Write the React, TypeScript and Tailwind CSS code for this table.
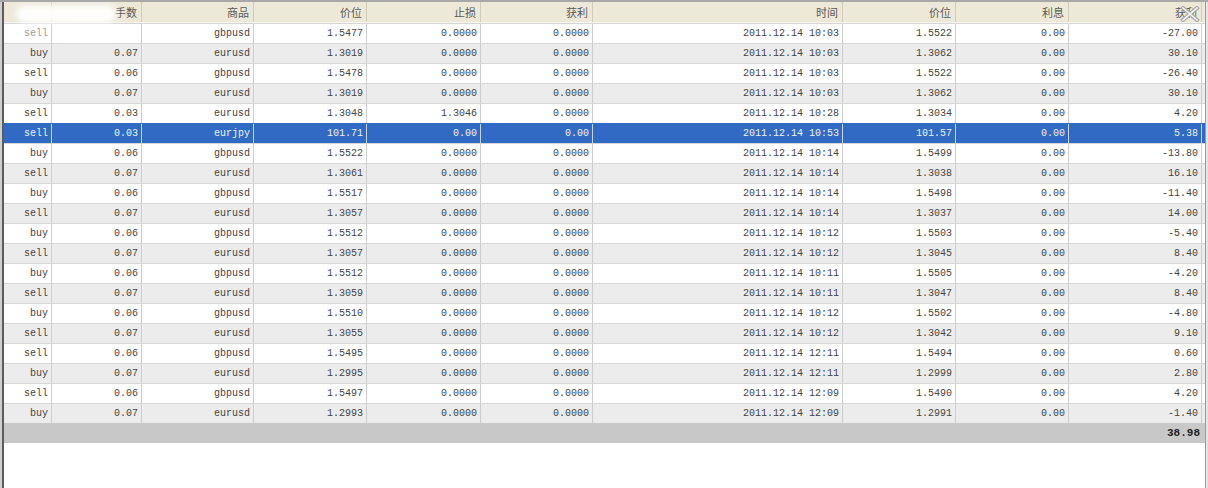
import React from "react";

const widths = [48, 90, 112, 113, 114, 112, 250, 113, 113, 133];
const headers = ["", "手数", "商品", "价位", "止损", "获利", "时间", "价位", "利息", "获利"];

const rows: string[][] = [
  ["sell", "", "gbpusd", "1.5477", "0.0000", "0.0000", "2011.12.14 10:03", "1.5522", "0.00", "-27.00"],
  ["buy", "0.07", "eurusd", "1.3019", "0.0000", "0.0000", "2011.12.14 10:03", "1.3062", "0.00", "30.10"],
  ["sell", "0.06", "gbpusd", "1.5478", "0.0000", "0.0000", "2011.12.14 10:03", "1.5522", "0.00", "-26.40"],
  ["buy", "0.07", "eurusd", "1.3019", "0.0000", "0.0000", "2011.12.14 10:03", "1.3062", "0.00", "30.10"],
  ["sell", "0.03", "eurusd", "1.3048", "1.3046", "0.0000", "2011.12.14 10:28", "1.3034", "0.00", "4.20"],
  ["sell", "0.03", "eurjpy", "101.71", "0.00", "0.00", "2011.12.14 10:53", "101.57", "0.00", "5.38"],
  ["buy", "0.06", "gbpusd", "1.5522", "0.0000", "0.0000", "2011.12.14 10:14", "1.5499", "0.00", "-13.80"],
  ["sell", "0.07", "eurusd", "1.3061", "0.0000", "0.0000", "2011.12.14 10:14", "1.3038", "0.00", "16.10"],
  ["buy", "0.06", "gbpusd", "1.5517", "0.0000", "0.0000", "2011.12.14 10:14", "1.5498", "0.00", "-11.40"],
  ["sell", "0.07", "eurusd", "1.3057", "0.0000", "0.0000", "2011.12.14 10:14", "1.3037", "0.00", "14.00"],
  ["buy", "0.06", "gbpusd", "1.5512", "0.0000", "0.0000", "2011.12.14 10:12", "1.5503", "0.00", "-5.40"],
  ["sell", "0.07", "eurusd", "1.3057", "0.0000", "0.0000", "2011.12.14 10:12", "1.3045", "0.00", "8.40"],
  ["buy", "0.06", "gbpusd", "1.5512", "0.0000", "0.0000", "2011.12.14 10:11", "1.5505", "0.00", "-4.20"],
  ["sell", "0.07", "eurusd", "1.3059", "0.0000", "0.0000", "2011.12.14 10:11", "1.3047", "0.00", "8.40"],
  ["buy", "0.06", "gbpusd", "1.5510", "0.0000", "0.0000", "2011.12.14 10:12", "1.5502", "0.00", "-4.80"],
  ["sell", "0.07", "eurusd", "1.3055", "0.0000", "0.0000", "2011.12.14 10:12", "1.3042", "0.00", "9.10"],
  ["sell", "0.06", "gbpusd", "1.5495", "0.0000", "0.0000", "2011.12.14 12:11", "1.5494", "0.00", "0.60"],
  ["buy", "0.07", "eurusd", "1.2995", "0.0000", "0.0000", "2011.12.14 12:11", "1.2999", "0.00", "2.80"],
  ["sell", "0.06", "gbpusd", "1.5497", "0.0000", "0.0000", "2011.12.14 12:09", "1.5490", "0.00", "4.20"],
  ["buy", "0.07", "eurusd", "1.2993", "0.0000", "0.0000", "2011.12.14 12:09", "1.2991", "0.00", "-1.40"],
];

const mono = { fontFamily: "'Liberation Mono', 'DejaVu Sans Mono', monospace" };

export default function App() {
  return (
    <div className="w-[1208px] h-[488px] bg-white overflow-hidden flex flex-col border-t-2 border-[#a8a8a8]">
      <div className="flex-1 flex border-l-2 border-[#cfcfcf] border-r-[2px] border-r-[#e4e4e4]">
        <div className="flex-1 flex border-l-2 border-[#5c5c5c] border-r border-r-[#9c9c9c]">
          <div className="flex-1 flex flex-col relative">
            {/* header */}
            <div className="flex h-[21px] bg-[#ece9d8] border-b border-[#f6f5ee]">
              {headers.map((h, i) => (
                <div
                  key={i}
                  style={{ width: widths[i], fontFamily: "'Noto Sans CJK SC', sans-serif" }}
                  className="shrink-0 h-full flex items-center justify-end pr-[4px] text-[11px] text-[#5a5a5a] border-r border-[#d0ccbb] leading-none"
                >
                  {h}
                </div>
              ))}
            </div>
            {/* rows */}
            {rows.map((r, ri) => {
              const sel = ri === 5;
              const bg = sel ? "bg-[#316ac5]" : ri % 2 === 1 ? "bg-[#ececec]" : "bg-white";
              return (
                <div key={ri} className={`flex h-[20px] ${bg} border-t ${sel ? "border-[#316ac5]" : "border-[#d6d6d6]"}`}>
                  {r.map((c, ci) => {
                    const faded = ri === 0 && ci === 0;
                    const color = sel
                      ? "border-[#c9d6ee] text-[#eef3fb]"
                      : faded
                      ? "border-[#cdcdcd] text-[#9a9a9a]"
                      : "border-[#cdcdcd] text-[#444]";
                    return (
                      <div
                        key={ci}
                        style={{ width: widths[ci], ...mono }}
                        className={`shrink-0 h-full flex items-center justify-end pr-[3px] text-[10px] border-r ${color}`}
                      >
                        {c}
                      </div>
                    );
                  })}
                </div>
              );
            })}
            {/* total */}
            <div className="flex h-[20px] bg-[#c8c8c8] items-center justify-end pr-[5px]">
              <span style={mono} className="text-[11px] font-bold text-[#222]">38.98</span>
            </div>
            {/* blur patch over header */}
            <div className="absolute left-[12px] top-[3px] w-[100px] h-[18px] bg-white rounded-full blur-[3px] opacity-95" />
            <div className="absolute left-[60px] top-[26px] w-[50px] h-[12px] bg-white rounded-full blur-[3px] opacity-80" />
            {/* close X overlay */}
            <svg className="absolute left-[1176px] top-[4px]" width="20" height="16" viewBox="0 0 20 16">
              <path d="M3 2 L17 14 M17 2 L3 14" stroke="#a9a9a9" strokeWidth="4" strokeLinecap="square" />
              <path d="M3 2 L17 14 M17 2 L3 14" stroke="#f4f4f4" strokeWidth="1.6" strokeLinecap="square" />
            </svg>
          </div>
        </div>
      </div>
    </div>
  );
}
